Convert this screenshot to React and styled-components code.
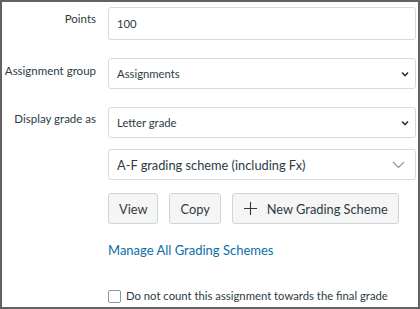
import styled, { createGlobalStyle } from 'styled-components'

const Global = createGlobalStyle`
  html, body { margin: 0; padding: 0; background: #fff; }
  body { font-family: Lato, 'Liberation Sans', sans-serif; color: #2d3b45; }
`

const Frame = styled.div`
  width: 420px;
  height: 309px;
  box-sizing: border-box;
  border: 2px solid #626262;
  overflow: hidden;
  display: grid;
  grid-template-columns: 94px 308px;
  column-gap: 12px;
  align-content: start;
  padding-top: 5px;
`

const Label = styled.div`
  text-align: right;
  font-size: 11.5px;
  line-height: 16px;
  padding-top: ${p => p.$top || 4}px;
  white-space: nowrap;
`

const Field = styled.div`
  display: flex;
  flex-direction: column;
  gap: 11px;
  margin-bottom: ${p => (p.$mb === undefined ? 18 : p.$mb)}px;
`

const TextInput = styled.div`
  height: 33px;
  box-sizing: border-box;
  border: 1px solid #d6dadd;
  border-radius: 3px;
  padding: 0 8px;
  display: flex;
  align-items: center;
  font-size: 11.3px;
`

const Select = styled(TextInput)`
  height: 31px;
  justify-content: space-between;
  padding-right: 6px;
  font-size: ${p => (p.$big ? 12.8 : 11.3)}px;
  ${p => p.$big && 'padding-right: 10px;'}
`

const Chevron = ({ big }) =>
  big ? (
    <svg width="13" height="8" viewBox="0 0 13 8">
      <path d="M1 1l5.5 5.5L12 1" fill="none" stroke="#8b969e" strokeWidth="1.1" />
    </svg>
  ) : (
    <svg width="8" height="6" viewBox="0 0 8 6">
      <path d="M1 1.5l3 3 3-3" fill="none" stroke="#333" strokeWidth="1.6" />
    </svg>
  )

const ButtonRow = styled.div`
  display: flex;
  gap: 11px;
  margin-top: 2px;
`

const Button = styled.div`
  height: 31px;
  box-sizing: border-box;
  padding: 0 10px 0 ${p => (p.$icon ? 11 : 10)}px;
  display: flex;
  align-items: center;
  gap: 10px;
  background: #f5f5f5;
  border: 1px solid #d0d4d7;
  border-radius: 3px;
  font-size: 12.8px;
  color: #2d3b45;
  white-space: nowrap;
`

const Link = styled.div`
  color: #0b6ea6;
  font-size: 13px;
  line-height: 16px;
  margin-top: 7px;
`

const Check = styled.label`
  grid-column: 2;
  display: flex;
  align-items: center;
  gap: 5px;
  font-size: 11.3px;
  line-height: 16px;
  margin-top: 30px;
  white-space: nowrap;
`

const Box = styled.span`
  width: 11px;
  height: 11px;
  border: 1px solid #8b969e;
  border-radius: 2px;
  background: #fff;
`

const Plus = () => (
  <svg width="13" height="13" viewBox="0 0 13 13">
    <path d="M6.5 0v13M0 6.5h13" stroke="#2d3b45" strokeWidth="1.1" />
  </svg>
)

export default function App() {
  return (
    <>
      <Global />
      <Frame>
        <Label $top={4}>Points</Label>
        <Field>
          <TextInput>100</TextInput>
        </Field>

        <Label $top={5}>Assignment group</Label>
        <Field>
          <Select>
            Assignments
            <Chevron />
          </Select>
        </Field>

        <Label $top={4}>Display grade as</Label>
        <Field $mb={0}>
          <Select>
            Letter grade
            <Chevron />
          </Select>
          <Select $big>
            A-F grading scheme (including Fx)
            <Chevron big />
          </Select>
          <ButtonRow>
            <Button>View</Button>
            <Button>Copy</Button>
            <Button $icon>
              <Plus />
              New Grading Scheme
            </Button>
          </ButtonRow>
          <Link>Manage All Grading Schemes</Link>
        </Field>

        <Check>
          <Box />
          Do not count this assignment towards the final grade
        </Check>
      </Frame>
    </>
  )
}
